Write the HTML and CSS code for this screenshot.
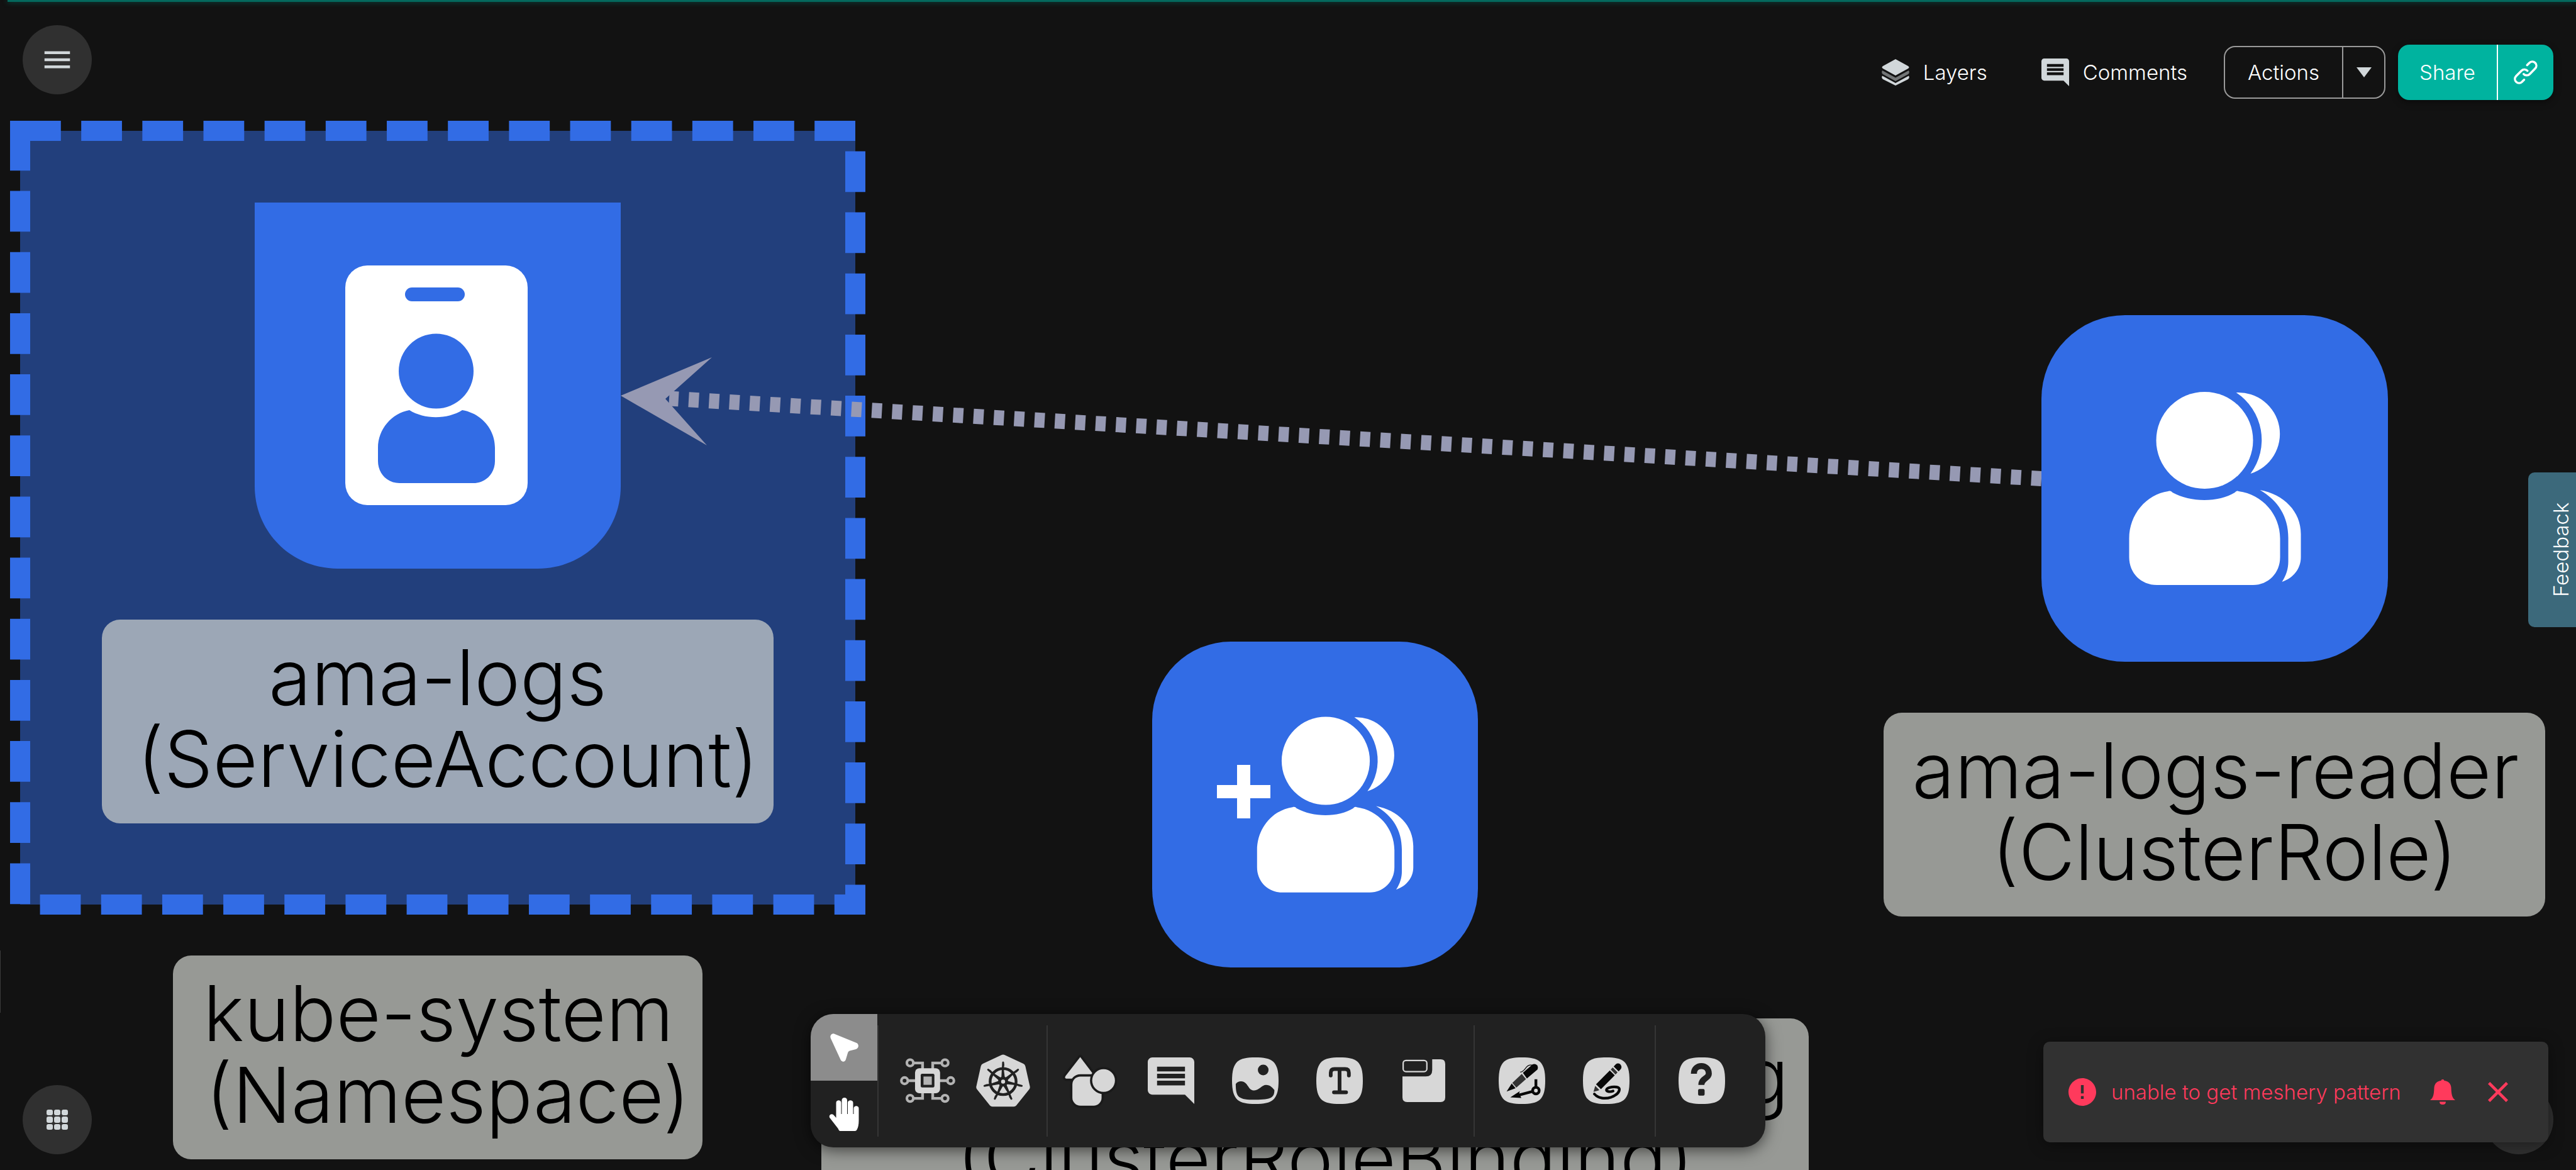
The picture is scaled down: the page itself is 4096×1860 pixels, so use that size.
FILE: index.html
```html
<!DOCTYPE html>
<html lang="en">
<head>
<meta charset="utf-8">
<title>Meshery design</title>
<link rel="stylesheet" href="styles.css">
</head>
<body>
<div class="app">

  <svg class="canvas" viewBox="0 0 4096 1860" preserveAspectRatio="xMinYMin slice" role="img" aria-label="Design canvas">
    <defs>
      <g id="people">
        <circle cx="0" cy="0" r="77"/>
        <path d="M50-76A66 66 0 0 1 73 53A90 90 0 0 0 50-76Z"/>
        <path d="M-58 81C-54 80-53 81-51 83C-22 99 22 99 48 83C50 81 51 80 54 81C92 86 120 118 120 156V186C120 211 101 230 77 230H-76C-101 230-120 211-120 186V156C-120 118-93 86-58 81Z"/>
        <path d="M88 79C126 86 153 113 153 149V186C153 204 141 219 123 225C130 214 133 204 133 193V155C133 121 117 96 88 79Z"/>
      </g>
    </defs>

    <g class="namespace">
      <rect class="namespace-box" x="32" y="208" width="1328" height="1230"/>
      <rect class="label-box" x="275" y="1519" width="842" height="324" rx="29"/>
      <text class="label" x="697" y="1655">kube-system</text>
      <text class="label" x="712" y="1785">(Namespace)</text>
    </g>

    <g class="edge">
      <path class="edge-line" d="M3246 761L1064 633.5"/>
      <path class="edge-arrow" d="M987 629L1132 568L1058 634L1124 708Z"/>
    </g>

    <g>
      <path class="node" d="M405 322H987V773C987 846 928 904 855 904H537C464 904 405 846 405 773Z"/>
      <rect class="glyph" x="549" y="422" width="290" height="381" rx="35"/>
      <rect class="node" x="644" y="457" width="95" height="22" rx="11"/>
      <circle class="node" cx="693.5" cy="590" r="59.5"/>
      <path class="node" d="M651 652C675 667 711 667 735 652C765 657 787 682 787 712V733C787 753 772 768 753 768H635C616 768 601 753 601 733V712C601 682 623 657 651 652Z"/>
      <rect class="label-box" x="162" y="985" width="1068" height="324" rx="29"/>
      <text class="label" x="696" y="1121">ama-logs</text>
      <text class="label" x="712" y="1251">(ServiceAccount)</text>
    </g>

    <g>
      <rect class="node" x="3246" y="501" width="551" height="551" rx="133"/>
      <use class="glyph" href="#people" transform="translate(3505.5 700)"/>
      <rect class="label-box" x="2995" y="1133" width="1052" height="324" rx="29"/>
      <text class="label" x="3523" y="1269">ama-logs-reader</text>
      <text class="label" x="3537" y="1399">(ClusterRole)</text>
    </g>

    <g>
      <rect class="node" x="1832" y="1020" width="518" height="518" rx="125"/>
      <use class="glyph" href="#people" transform="translate(2108 1209.5) scale(.91)"/>
      <path class="glyph" d="M1967 1216h21v32h32v21h-32v32h-21v-32h-32v-21h32z"/>
      <rect class="label-box" x="1306" y="1619" width="1570" height="324" rx="29"/>
      <text class="label" x="2091" y="1755">amalogsclusterrolebinding</text>
      <text class="label" x="2107" y="1885">(ClusterRoleBinding)</text>
    </g>
  </svg>

  <div class="progress"></div>
  <div class="drawer-edge"></div>

  <header class="topbar">
    <button class="round" aria-label="Menu">
      <svg width="54" height="54" viewBox="0 0 24 24"><path d="M3 18h18v-2H3zm0-5h18v-2H3zm0-7v2h18V6z"/></svg>
    </button>
    <nav class="actions">
      <button class="plain">
        <svg width="44" height="42" viewBox="0 0 44 42">
          <path d="M22 0L42 11Q45 13 42 15L22 26L2 15Q-1 13 2 11Z"/>
          <path d="M1 18L22 29.500L43 18Q45 22 42 24L22 35L2 24Q-1 22 1 18Z" opacity=".5"/>
          <path d="M1 26.500L22 38L43 26.500Q45 30 42 32L22 42L2 32Q-1 30 1 26.500Z"/>
        </svg>
        Layers
      </button>
      <button class="plain">
        <svg width="44" height="44" viewBox="2 2 20 20"><path fill-rule="evenodd" d="M21.990 4c0-1.100-.890-2-1.990-2H4c-1.100 0-2 .9-2 2v12c0 1.100.9 2 2 2h14l4 4zM18 14H6v-2h12zm0-3H6V9h12zm0-3H6V6h12z"/></svg>
        Comments
      </button>
      <div class="split outline">
        <button class="split-main">Actions</button>
        <button class="split-side" aria-label="More actions"><svg width="24" height="16" viewBox="0 0 24 16"><path d="M0 0h24L12 16z"/></svg></button>
      </div>
      <div class="split share">
        <button class="split-main">Share</button>
        <button class="split-side" aria-label="Copy link">
          <svg width="38" height="38" viewBox="789 152 152 152" class="link-icon"><path d="M874 182L888 168C898 157 914 157 925 167C936 178 935 194 925 204L890 240C880 250 863 250 852 239M876 218C865 207 849 207 839 217L804 252C794 263 794 279 805 289C816 299 831 298 841 289L855 275"/></svg>
        </button>
      </div>
    </nav>
  </header>

  <button class="feedback">Feedback</button>

  <footer class="bottombar">
    <button class="round" aria-label="Apps">
      <svg width="34" height="32" viewBox="0 0 34 32">
        <rect x="0" y="0" width="10" height="9" rx="3"/><rect x="12" y="0" width="10" height="9" rx="3"/><rect x="24" y="0" width="10" height="9" rx="3"/>
        <rect x="0" y="11" width="10" height="10" rx="3"/><rect x="12" y="11" width="10" height="10" rx="3"/><rect x="24" y="11" width="10" height="10" rx="3"/>
        <rect x="0" y="23" width="10" height="9" rx="3"/><rect x="12" y="23" width="10" height="9" rx="3"/><rect x="24" y="23" width="10" height="9" rx="3"/>
      </svg>
    </button>

    <div class="toolbar" role="toolbar" aria-label="Design tools">
      <div class="modes">
        <button class="mode selected" aria-label="Select">
          <svg width="45" height="45" viewBox="0 0 45 45"><path d="M7 .8L42 15C46 17 46 23 41 25L31 27.500Q28.500 28 28 31L25 41C24 45.500 18.500 46 16.500 41.500L.8 7.500C-1 3 3-1 7 .8Z"/></svg>
        </button>
        <button class="mode" aria-label="Pan">
          <svg width="48" height="53" viewBox="0 0 47 53"><path d="M17 53Q15 52 14 49L.8 32C-1.500 28 3.500 24.500 7 27.500L11 32V8C11 3 19 3 19 8V26H20V4C20-1.300 28.500-1.300 28.500 4V26H29.500V8C29.500 3 38 3 38 8V26H39V17C39 12 47 12 47 17V36Q47 46 44 51Q43 53 41 53Z"/></svg>
        </button>
      </div>
      <div class="tools tools-components">
        <button class="tool" aria-label="Components">
          <svg width="88" height="72" viewBox="33 126 360 294">
            <g fill="none" stroke="#b3b3b3" stroke-width="18">
              <path d="M120 158H180V200M306 158H246V200M120 388H180V346M306 388H246V346M84 273H140M342 273H286"/>
              <g stroke-width="17"><circle cx="99" cy="157" r="21"/><circle cx="326" cy="157" r="21"/><circle cx="63" cy="273" r="21"/><circle cx="363" cy="273" r="21"/><circle cx="99" cy="388" r="21"/><circle cx="326" cy="388" r="21"/></g>
            </g>
            <rect x="131" y="192" width="163" height="163" rx="28"/>
            <rect x="168" y="228" width="89" height="89" rx="9" fill="#212121"/>
            <rect x="186" y="246" width="54" height="54" fill="#b3b3b3"/>
          </svg>
        </button>
        <button class="tool" aria-label="Kubernetes">
          <svg width="86" height="84" viewBox="524 103 350 340">
            <path d="M690 106Q699 102 708 106L830 163Q840 168 843 179L872 309Q875 320 868 329L784 434Q778 441 768 441H630Q620 441 614 434L530 329Q523 320 526 309L555 179Q558 168 568 163Z"/>
            <g transform="translate(699 279)" fill="#212121">
              <circle r="84" fill="none" stroke="#212121" stroke-width="18"/>
              <g id="spoke"><path d="M-12-10L-6-126Q0-134 6-126L8-108L4-84L13-10Z"/></g>
              <use href="#spoke" transform="rotate(51.430)"/><use href="#spoke" transform="rotate(102.860)"/><use href="#spoke" transform="rotate(154.290)"/><use href="#spoke" transform="rotate(205.710)"/><use href="#spoke" transform="rotate(257.140)"/><use href="#spoke" transform="rotate(308.570)"/>
              <circle r="32"/>
              <circle r="13" fill="#d7d7d7"/>
            </g>
          </svg>
        </button>
      </div>
      <div class="tools tools-shapes">
        <button class="tool tool-first" aria-label="Shapes">
          <svg width="86" height="88" viewBox="1090 95 352 358">
            <path d="M1203 120L1282 225L1280 261H1112Q1100 257 1107 244Z" stroke="#1a1a1a" stroke-width="29" stroke-linejoin="round" paint-order="stroke"/>
            <rect x="1152" y="247" width="190" height="190" rx="52" stroke="#1a1a1a" stroke-width="29" paint-order="stroke"/>
            <circle cx="1355" cy="273" r="74" stroke="#1a1a1a" stroke-width="29" paint-order="stroke"/>
          </svg>
        </button>
        <button class="tool" aria-label="Comment">
          <svg width="74" height="74" viewBox="2 2 20 20"><path fill-rule="evenodd" d="M22 4c0-1.100-.9-2-2-2H4c-1.100 0-2 .9-2 2v12c0 1.100.9 2 2 2h14l4 4zM18 14H6v-2h12zm0-3H6V9h12zm0-3H6V6h12z"/></svg>
        </button>
        <button class="tool" aria-label="Image">
          <svg width="74" height="74" viewBox="0 0 100 100">
            <path d="M50 0C86 0 100 8 100 50S86 100 50 100S0 92 0 50S14 0 50 0Z"/>
            <circle cx="67" cy="27" r="11.500" fill="#212121"/>
            <path fill="#212121" d="M8 57C14 49 25 50 31 57C37 65 39 71 48 71C58 70 65 59 73 59C82 59 87 65 91 70C91 86 85 91 50 91C14 91 8 86 8 57Z"/>
          </svg>
        </button>
        <button class="tool" aria-label="Text">
          <svg width="74" height="74" viewBox="0 0 100 100">
            <path d="M50 0C86 0 100 8 100 50S86 100 50 100S0 92 0 50S14 0 50 0Z"/>
            <path d="M31 39V33Q31 25 39 25H62Q70 25 70 33V39M50 25V75M38 75H64" fill="none" stroke="#212121" stroke-width="8" stroke-linecap="round"/>
          </svg>
        </button>
        <button class="tool" aria-label="Section">
          <svg width="68" height="68" viewBox="0 0 92 92">
            <rect x="1.500" y="2.500" width="51" height="24" rx="6" fill="none" stroke="#d7d7d7" stroke-width="3"/>
            <path d="M64 0H82Q92 0 92 10V82Q92 92 82 92H10Q0 92 0 82V37H50Q64 37 64 23Z"/>
          </svg>
        </button>
      </div>
      <div class="tools tools-draw">
        <button class="tool" aria-label="Edge pen">
          <svg width="74" height="74" viewBox="516 123 300 300">
            <path d="M666 123C774 123 816 147 816 273S774 423 666 423S516 399 516 273S558 123 666 123Z"/>
            <g fill="#080808">
              <path d="M672 222L735 168Q752 162 764 174Q773 188 765 202L698 259Z"/>
              <path d="M665 229L692 263L630 318L604 287Z" fill="#333"/>
              <path d="M600 291L625 322L567 343Z"/>
              <path d="M655 218C688 214 688 175 718 172L732 172" fill="none" stroke="#080808" stroke-width="5"/>
              <path d="M747 264h18v50h-18z"/>
              <path d="M591 380L652 341L648 356L728 335L732 352L656 372L662 384Z"/>
            </g>
            <circle cx="756" cy="337" r="21" fill="none" stroke="#080808" stroke-width="18"/>
          </svg>
        </button>
        <button class="tool" aria-label="Freehand pencil">
          <svg width="74" height="74" viewBox="1062 120 300 300">
            <path d="M1212 120C1320 120 1362 144 1362 270S1320 420 1212 420S1062 396 1062 270S1104 120 1212 120Z"/>
            <g fill="#080808">
              <path d="M1260 179L1273 165Q1288 153 1303 165Q1316 181 1306 195L1292 210Z"/>
              <path d="M1254 185L1285 216L1272 230L1241 198Z" fill="#333"/>
              <path d="M1235 204L1267 236L1178 325L1146 293Z"/>
              <path d="M1141 303L1168 331L1130 342Z" fill="#333"/>
            </g>
            <path d="M1136 356C1160 385 1205 389 1245 376C1282 362 1297 344 1297 324C1294 304 1235 308 1217 322C1203 338 1232 346 1256 337" fill="none" stroke="#080808" stroke-width="17" stroke-linecap="round"/>
          </svg>
        </button>
      </div>
      <div class="tools tools-help">
        <button class="tool" aria-label="Help">
          <svg width="74" height="74" viewBox="0 0 100 100">
            <path d="M50 0C86 0 100 8 100 50S86 100 50 100S0 92 0 50S14 0 50 0Z"/>
            <path d="M33 35C33 13 65 13 65 35C65 45 49 45 49 59" fill="none" stroke="#212121" stroke-width="13"/>
            <rect x="42" y="68" width="14" height="14" rx="3" fill="#212121"/>
          </svg>
        </button>
      </div>
    </div>

    <button class="round" aria-label="Help center"></button>
  </footer>

  <div class="toast" role="alert">
    <svg class="toast-icon" width="44" height="44" viewBox="2 2 20 20"><path fill-rule="evenodd" d="M12 2C6.480 2 2 6.480 2 12s4.480 10 10 10 10-4.480 10-10S17.520 2 12 2zm1 15h-2v-2h2zm0-4h-2V7h2z"/></svg>
    <span class="toast-text">unable to get meshery pattern</span>
    <button class="toast-button" aria-label="Notifications"><svg width="40" height="40" viewBox="0 0 40 40"><path d="M0 33C5 29 6 25 6.500 13C7 6 12 2.500 17.500 2C17.500-.7 22.500-.7 22.500 2C28 2.500 33 6 33.500 13C34 25 35 29 40 33ZM15 35.500H25Q25 40 20 40T15 35.500Z"/></svg></button>
    <button class="toast-button" aria-label="Close"><svg width="32" height="32" viewBox="5 5 14 14"><path d="M19 6.410L17.590 5 12 10.590 6.410 5 5 6.410 10.590 12 5 17.590 6.410 19 12 13.410 17.590 19 19 17.590 13.410 12z"/></svg></button>
  </div>
</div>
</body>
</html>
```
FILE: styles.css
```css
* {
  box-sizing: border-box;
}

body {
  margin: 0;
  background: #121212;
  color: #fff;
  font-family: Inter, "Liberation Sans", sans-serif;
  font-size: 33px;
  font-weight: 300;
  line-height: 44px;
}

button {
  margin: 0;
  padding: 0;
  border: 0;
  background: none;
  color: inherit;
  font: inherit;
  cursor: pointer;
}

svg {
  display: block;
}

.app {
  position: relative;
  display: flex;
  flex-direction: column;
  justify-content: space-between;
  height: 100vh;
  overflow: hidden;
}

/* Design canvas */
.canvas {
  position: absolute;
  inset: 0;
  width: 100%;
  height: 100%;
}

.namespace-box {
  fill: #326ce5;
  fill-opacity: .5;
  stroke: #326ce5;
  stroke-width: 32;
  stroke-dasharray: 64.780 32.390;
}

.node {
  fill: #326ce5;
}

.glyph {
  fill: #fff;
}

.edge-line {
  stroke: #9699b3;
  stroke-width: 24;
  stroke-dasharray: 16.200 16.200;
}

.edge-arrow {
  fill: #9699b3;
}

.label-box {
  fill: #d4d7d1;
  fill-opacity: .69;
}

.label {
  fill: #000;
  font-size: 123px;
  text-anchor: middle;
}

/* Page edges */
.progress {
  position: absolute;
  top: 0;
  left: 12px;
  right: 0;
  height: 3px;
  background: #04695d;
  box-shadow: 0 0 8px #04695d;
}

.drawer-edge {
  position: absolute;
  left: 0;
  bottom: 250px;
  width: 1px;
  height: 99px;
  background: #3a3a3a;
}

.round {
  display: flex;
  align-items: center;
  justify-content: center;
  width: 110px;
  height: 110px;
  border-radius: 50%;
  background: #303030;
  fill: #d1d7da;
}

/* Top bar */
.topbar {
  position: relative;
  display: flex;
  justify-content: space-between;
  align-items: flex-start;
  padding: 40px 36px 0;
}

.actions {
  display: flex;
  align-items: center;
  padding-top: 31px;
}

.plain {
  display: flex;
  align-items: center;
  gap: 22px;
  margin-right: 58px;
  fill: #d1d7da;
}

.plain:first-child {
  margin-right: 86px;
}

.split {
  display: flex;
  overflow: hidden;
  border-radius: 18px;
}

.outline {
  height: 84px;
  margin-right: 20px;
  border: 2px solid #9a9a9a;
}

.split-main {
  width: 186px;
}

.split-side {
  display: flex;
  align-items: center;
  justify-content: center;
  width: 67px;
  border-left: 2px solid #9a9a9a;
  fill: #d1d7da;
}

.share {
  height: 88px;
  background: #00b39f;
  box-shadow: 0 4px 12px #0006;
}

.share .split-main {
  width: 157px;
}

.share .split-side {
  width: 90px;
  border-color: #fff;
}

.link-icon {
  fill: none;
  stroke: #fff;
  stroke-width: 14;
  stroke-linecap: round;
}

.feedback {
  position: absolute;
  top: 751px;
  right: 0;
  width: 76px;
  height: 246px;
  padding-right: 28px;
  border-radius: 0 10px 10px 0;
  background: #3c697b;
  writing-mode: vertical-rl;
  transform: rotate(180deg);
}

/* Bottom bar */
.bottombar {
  position: relative;
  display: flex;
  align-items: flex-end;
  justify-content: space-between;
  padding: 0 36px 25px;
}

.toolbar {
  display: flex;
  align-items: center;
  height: 212px;
  margin-bottom: 11px;
  overflow: hidden;
  border-radius: 36px;
  background: #212121;
  fill: #d7d7d7;
  box-shadow: 0 4px 24px #0009;
}

.modes {
  display: flex;
  flex-direction: column;
  align-self: stretch;
  width: 106px;
  fill: #fff;
}

.mode {
  display: flex;
  flex: 1;
  align-items: center;
  justify-content: center;
}

.selected {
  background: #8c8c8c;
}

.tools {
  display: flex;
  height: 177px;
  border-left: 2px solid #353535;
}

.tool {
  display: flex;
  align-items: center;
  justify-content: center;
  width: 134px;
}

.tools-components {
  padding: 0 9px 0 18px;
}

.tools-components .tool {
  width: 120px;
}

.tools-shapes {
  padding: 0 12px 0 5px;
}

.tool-first {
  width: 124px;
}

.tools-draw {
  padding: 0 10px 0 8px;
}

.tools-help {
  padding: 0 34px 0 6px;
}

/* Notification */
.toast {
  position: absolute;
  right: 44px;
  bottom: 44px;
  display: flex;
  align-items: center;
  width: 803px;
  height: 160px;
  padding: 0 64px 0 40px;
  border-radius: 10px;
  background: #313131;
  color: #ff3a5c;
  fill: #ff3a5c;
  box-shadow: 0 4px 24px #0006;
}

.toast-text {
  flex: 1;
  padding-left: 24px;
}

.toast-button + .toast-button {
  margin-left: 52px;
}
```
